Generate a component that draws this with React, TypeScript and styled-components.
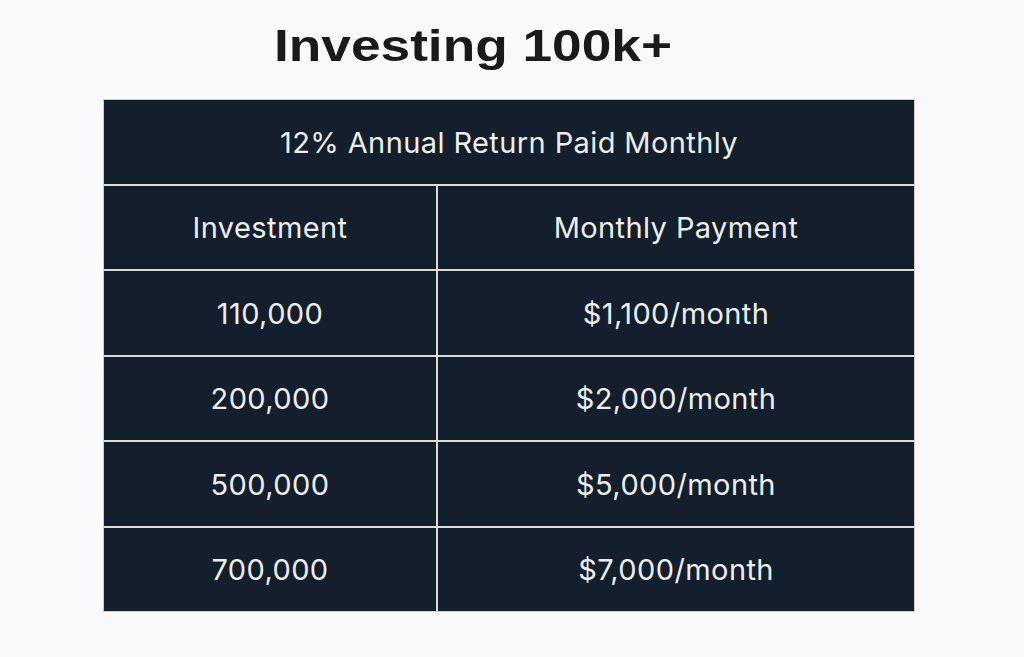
import React from "react";
import styled, {createGlobalStyle} from "styled-components";

const GlobalStyle = createGlobalStyle`
  html, body {
    margin: 0;
    padding: 0;
    background: #f8f9fb;
  }
`

const PageDiv = styled.div`
  width: 1024px;
  height: 657px;
  box-sizing: border-box;
  padding: 20px 0 0 103px;
  display: flex;
  flex-direction: column;
`

const TitleH1 = styled.h1`
  align-self: flex-start;
  margin: 0 0 27px 171px;
  font-family: "Liberation Sans", Arial, sans-serif;
  font-weight: 700;
  font-size: 44px;
  line-height: 52px;
  color: #1a1a1a;
  transform: scaleX(1.21);
  transform-origin: left center;
`

const TableDiv = styled.div`
  width: 812px;
  height: 513px;
  display: grid;
  grid-template-columns: 332px 1fr;
  grid-auto-rows: 1fr;
  gap: 2px;
  background: #dedad6;
  border: 1px solid #cfcac6;
  box-sizing: border-box;
`

const CellDiv = styled.div<{ $span?: boolean }>`
  grid-column: ${({$span}) => ($span ? "1 / -1" : "auto")};
  background: #141f2d;
  display: flex;
  justify-content: center;
  align-items: center;
  padding-top: 1px;
  font-family: Inter, "Noto Sans", sans-serif;
  font-size: 29px;
  font-weight: 400;
  letter-spacing: 0.4px;
  color: #eeeeee;
`

const rows = [
    ["110,000", "$1,100/month"],
    ["200,000", "$2,000/month"],
    ["500,000", "$5,000/month"],
    ["700,000", "$7,000/month"],
]

const App = () => {
    return (
        <>
            <GlobalStyle/>
            <PageDiv>
                <TitleH1>Investing 100k+</TitleH1>
                <TableDiv>
                    <CellDiv $span>12% Annual Return Paid Monthly</CellDiv>
                    <CellDiv>Investment</CellDiv>
                    <CellDiv>Monthly Payment</CellDiv>
                    {
                        rows.map(([amount, payment]) => (
                            <React.Fragment key={amount}>
                                <CellDiv>{amount}</CellDiv>
                                <CellDiv>{payment}</CellDiv>
                            </React.Fragment>
                        ))
                    }
                </TableDiv>
            </PageDiv>
        </>
    )
}

export default App
